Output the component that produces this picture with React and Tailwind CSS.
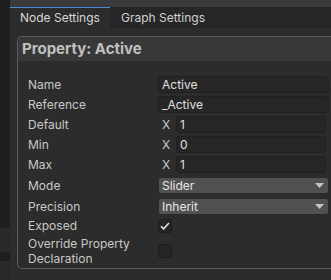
import { ChevronDown } from 'lucide-react';

const FONT = { fontFamily: 'Inter, "Noto Sans", sans-serif' };

function Label({ children }) {
  return <div className="w-[140px] shrink-0 pl-[10px] text-[12px] leading-[14px] text-[#c8c8c8]">{children}</div>;
}

function TextField({ value }) {
  return (
    <div className="flex-1 h-[17px] rounded-[3px] border border-[#202020] bg-[#262626] px-[3px] text-[12px] leading-[15px] text-[#e0e0e0]">
      {value}
    </div>
  );
}

function VecField({ value }) {
  return (
    <div className="flex flex-1 items-center">
      <span className="w-[18px] pl-[4px] text-[12px] text-[#c8c8c8]">X</span>
      <div className="mr-[5px] flex-1 h-[17px] rounded-[3px] border border-[#202020] bg-[#262626] px-[3px] text-[12px] leading-[15px] text-[#e0e0e0]">
        {value}
      </div>
    </div>
  );
}

function Dropdown({ value }) {
  return (
    <div className="flex flex-1 h-[17px] items-center justify-between rounded-[3px] border border-[#2a2a2a] bg-[#515151] pl-[3px] pr-[4px] text-[12px] text-[#e6e6e6]">
      <span>{value}</span>
      <svg width="9" height="5" viewBox="0 0 9 5"><path d="M0 0h9L4.5 5z" fill="#c4c4c4" /></svg>
    </div>
  );
}

function Check({ on }) {
  return (
    <div className="flex h-[14px] w-[14px] items-center justify-center rounded-[3px] border border-[#1c1c1c] bg-[#252525]">
      {on && (
        <svg width="10" height="8" viewBox="0 0 10 8">
          <path d="M1 4.2l2.6 2.6L9 1" stroke="#e6e6e6" strokeWidth="1.5" fill="none" />
        </svg>
      )}
    </div>
  );
}

export default function App() {
  return (
    <div className="flex h-[280px] w-[331px] overflow-hidden bg-[#2c2c2c]" style={FONT}>
      {/* side strip */}
      <div className="flex w-[10px] shrink-0 flex-col bg-[#1f1f1f]">
        <div className="h-[228px]" />
        <div className="h-[24px] bg-[#292929]" />
        <div className="h-[9px]" />
        <div className="flex-1 bg-[#292929]" />
      </div>

      <div className="flex min-w-0 flex-1 flex-col">
        <div className="h-[7px] bg-[#3a3a3a]" />
        {/* tabs */}
        <div className="flex h-[21px] bg-[#262626] text-[12px]">
          <div className="flex w-[100px] items-center border-t border-[#4a89dc] bg-[#2c2c2c] pl-[10px] text-[#d6d6d6]">
            Node Settings
          </div>
          <div className="flex items-center pl-[11px] text-[#d0d0d0]">Graph Settings</div>
        </div>

        <div className="flex-1 pl-[7px] pt-[8px]">
          <div className="h-[233px] rounded-l-[5px] border border-r-0 border-[#5c5c5c]">
            <div className="flex h-[24px] items-center rounded-tl-[5px] bg-[#383838] pl-[4px] text-[15px] font-bold text-[#c0c0c0]">
              Property: Active
            </div>

            <div className="flex flex-col pt-[15px]">
              <div className="flex h-[17px] items-center">
                <Label>Name</Label>
                <div className="mr-[2px] flex flex-1"><TextField value="Active" /></div>
              </div>
              <div className="mt-[3px] flex h-[17px] items-center">
                <Label>Reference</Label>
                <div className="mr-[2px] flex flex-1"><TextField value="_Active" /></div>
              </div>
              <div className="mt-[3px] flex h-[17px] items-center">
                <Label>Default</Label>
                <VecField value="1" />
              </div>
              <div className="mt-[3px] flex h-[17px] items-center">
                <Label>Min</Label>
                <VecField value="0" />
              </div>
              <div className="mt-[3px] flex h-[17px] items-center">
                <Label>Max</Label>
                <VecField value="1" />
              </div>
              <div className="mt-[4px] flex h-[17px] items-center">
                <Label>Mode</Label>
                <div className="mr-[2px] flex flex-1"><Dropdown value="Slider" /></div>
              </div>
              <div className="mt-[4px] flex h-[17px] items-center">
                <Label>Precision</Label>
                <div className="mr-[2px] flex flex-1"><Dropdown value="Inherit" /></div>
              </div>
              <div className="mt-[2px] flex h-[18px] items-center">
                <Label>Exposed</Label>
                <Check on />
              </div>
              <div className="mt-[1px] flex items-center">
                <div className="w-[140px] shrink-0 pl-[10px] text-[12px] leading-[15px] text-[#c8c8c8]">
                  Override Property
                  <br />
                  Declaration
                </div>
                <Check />
              </div>
            </div>
          </div>
        </div>
      </div>
    </div>
  );
}
